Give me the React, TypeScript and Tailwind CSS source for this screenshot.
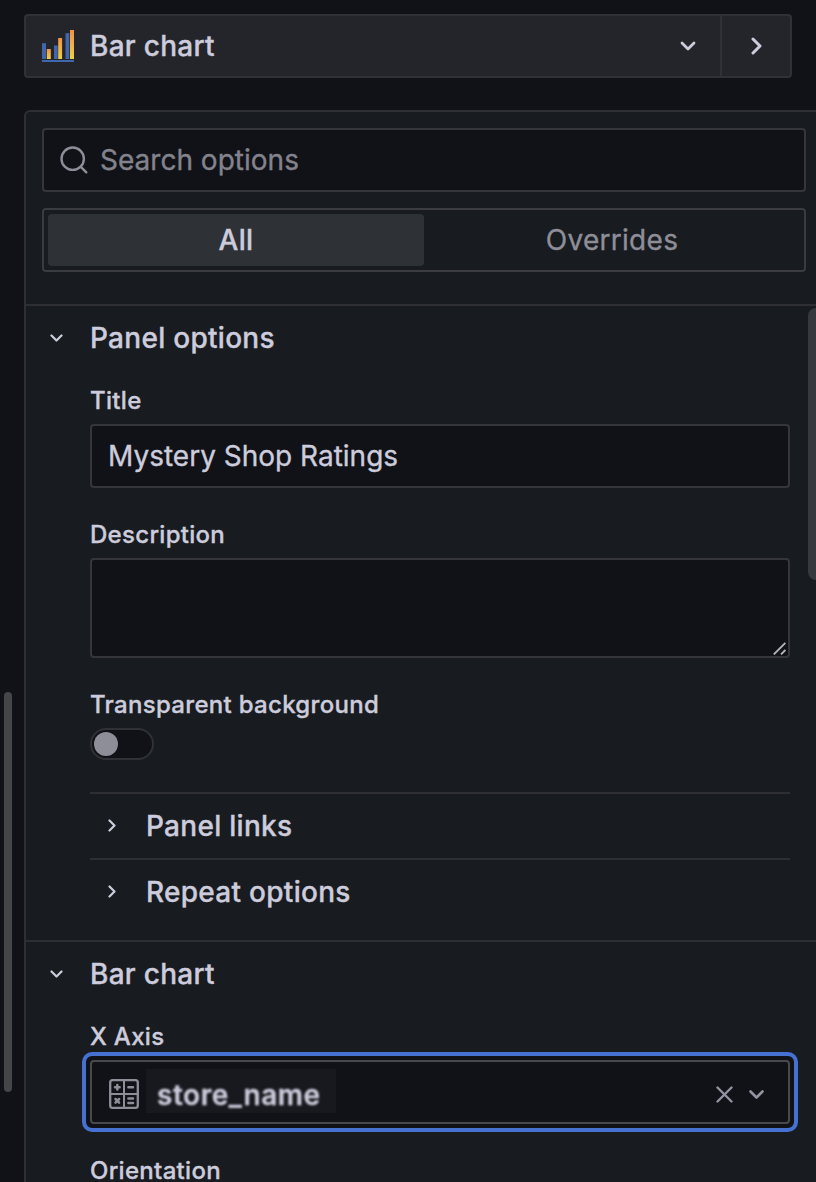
import type { ReactNode } from "react";

type StrokeProps = { d: string; w: number; h: number; sw: number; className?: string };

function Stroke({ d, w, h, sw, className = "" }: StrokeProps) {
  return (
    <svg
      width={w}
      height={h}
      viewBox={`0 0 ${w} ${h}`}
      fill="none"
      stroke="currentColor"
      strokeWidth={sw}
      strokeLinecap="round"
      strokeLinejoin="round"
      className={`shrink-0 ${className}`}
    >
      <path d={d} />
    </svg>
  );
}

function BarChartLogo() {
  return (
    <svg width="32" height="32" viewBox="0 0 32 32" className="shrink-0">
      <defs>
        <linearGradient id="warm" x1="0" y1="0" x2="0" y2="29" gradientUnits="userSpaceOnUse">
          <stop offset="0" stopColor="#f2924a" />
          <stop offset="1" stopColor="#ecd043" />
        </linearGradient>
        <linearGradient id="warmMid" x1="0" y1="8" x2="0" y2="29" gradientUnits="userSpaceOnUse">
          <stop offset="0" stopColor="#f2924a" />
          <stop offset="1" stopColor="#ecd043" />
        </linearGradient>
        <linearGradient id="warmLow" x1="0" y1="19" x2="0" y2="29" gradientUnits="userSpaceOnUse">
          <stop offset="0" stopColor="#f2924a" />
          <stop offset="1" stopColor="#ecd043" />
        </linearGradient>
      </defs>
      <g fill="#4067ab">
        <rect x="0" y="13.2" width="4" height="15.8" />
        <rect x="12" y="15.5" width="3.7" height="13.5" />
        <rect x="23.5" y="3.2" width="3.8" height="25.8" />
        <rect x="0" y="30" width="32" height="2" />
      </g>
      <rect x="4.8" y="19" width="4" height="10" fill="url(#warmLow)" />
      <rect x="16.2" y="8" width="3.9" height="21" fill="url(#warmMid)" />
      <rect x="28" y="0" width="4" height="29" fill="url(#warm)" />
    </svg>
  );
}

function CalculatorIcon() {
  return (
    <svg
      width="30"
      height="30"
      viewBox="0 0 30 30"
      fill="none"
      stroke="currentColor"
      strokeWidth="2.3"
      strokeLinecap="round"
      className="mt-1 shrink-0 text-[#8e8e99]"
    >
      <rect x="1.2" y="1.2" width="27.6" height="27.6" rx="2.4" />
      <path d="M15 1.3V28.7M1.3 15H28.7" strokeWidth="2" />
      <path
        d="M6 8.3H10.6M8.3 6V10.6M19.4 8.3H24M6.5 20L10.1 23.6M10.1 20L6.5 23.6M19.4 19.6H24M19.4 23.9H24"
        strokeWidth="2.5"
      />
    </svg>
  );
}

function SectionHeader({ children }: { children: ReactNode }) {
  return (
    <div className="flex h-16 items-center pl-[23.5px]">
      <Stroke d="M1.5 1.5L6.5 6.5L11.5 1.5" w={13} h={8} sw={2.2} />
      <span className="ml-[27.5px] text-[28px] font-medium tracking-[0.28px] whitespace-nowrap">{children}</span>
    </div>
  );
}

function SubHeader({ children }: { children: ReactNode }) {
  return (
    <div className="flex h-[66px] items-center border-t-2 border-[#2d2f34] pl-[18px]">
      <Stroke d="M1.5 1.5L6.5 6.5L1.5 11.5" w={8} h={13} sw={2.2} className="mb-px" />
      <span className="ml-[30px] text-[28px] font-medium tracking-[0.28px] whitespace-nowrap">{children}</span>
    </div>
  );
}

function Label({ children }: { children: ReactNode }) {
  return (
    <div className="h-8 pt-px text-[24px] leading-8 font-medium tracking-[0.3px] whitespace-nowrap">{children}</div>
  );
}

export default function App() {
  return (
    <div className="relative flex h-[1182px] w-[816px] flex-col overflow-hidden bg-[#111217] pt-[14px] pl-6 font-['Inter',sans-serif] text-[28px] text-[#ccccdc] [-webkit-text-stroke:0.35px]">
      <div className="absolute top-[692px] left-1 h-[400px] w-2 rounded-full bg-[#444549]" />
      <div className="absolute top-[308px] left-[808px] h-[272px] w-4 rounded-lg bg-[#36393d]" />

      <div className="flex h-16 w-[768px] shrink-0 rounded-[4px] border-2 border-[#303136] bg-[#24252b]">
        <div className="flex w-[694px] items-center pr-[24px] pl-4">
          <BarChartLogo />
          <span className="ml-4 grow text-[28px] font-medium tracking-[0.28px]">Bar chart</span>
          <Stroke d="M2 2L8 8L14 2" w={16} h={10} sw={2.8} />
        </div>
        <div className="flex grow items-center justify-center border-l-2 border-[#303136]">
          <Stroke d="M2 2L9 9L2 16" w={11} h={18} sw={3} />
        </div>
      </div>

      <div className="mt-8 flex h-[1080px] shrink-0 flex-col rounded-tl-[6px] border-t-2 border-l-2 border-[#2d2f34] bg-[#181b1f]">
        <div className="h-[194px] shrink-0 border-b-2 border-[#2d2f34] pt-4 pr-[10px] pl-4">
          <div className="flex h-16 items-center rounded-[4px] border-2 border-[#35363b] bg-[#111217] pl-4 text-[#8e8e99]">
            <svg
              width="28"
              height="28"
              viewBox="0 0 28 28"
              fill="none"
              stroke="currentColor"
              strokeWidth="2.4"
              strokeLinecap="round"
              className="shrink-0"
            >
              <circle cx="12.7" cy="12.7" r="11.2" />
              <path d="M20.8 20.8L26.3 26.3" />
            </svg>
            <span className="ml-3 tracking-[0.01px] text-[#83838e]">Search options</span>
          </div>
          <div className="mt-4 flex h-16 items-center rounded-[4px] border-2 border-[#3a3c41] p-1">
            <div className="flex h-[52px] w-[376px] items-center justify-center rounded-[4px] bg-[#2e3136] font-medium tracking-[0.28px]">
              All
            </div>
            <div className="flex h-[52px] w-[376px] items-center justify-center tracking-[0.28px] text-[#8e8e99]">
              Overrides
            </div>
          </div>
        </div>

        <div className="h-[636px] shrink-0 border-b-2 border-[#2d2f34]">
          <SectionHeader>Panel options</SectionHeader>
          <div className="ml-16 w-[700px] pt-[14px]">
            <Label>Title</Label>
            <div className="mt-2 flex h-16 items-center rounded-[4px] border-2 border-[#35363b] bg-[#111217] pl-4">
              Mystery Shop Ratings
            </div>
            <div className="h-[30px]" />
            <Label>Description</Label>
            <div className="mt-2 flex h-[100px] items-end justify-end rounded-[4px] border-2 border-[#35363b] bg-[#111217] pr-[2px] pb-px">
              <svg width="13" height="13" viewBox="0 0 13 13" stroke="#b4b4b6" strokeWidth="1.9">
                <path d="M0.8 12.4L12.4 0.8M8 12.4L12.4 8" />
              </svg>
            </div>
            <div className="h-[30px]" />
            <Label>Transparent background</Label>
            <div className="mt-2 mb-8 flex h-8 w-16 items-center rounded-full border-2 border-[#303136] bg-[#111217] pl-[2px]">
              <div className="size-6 rounded-full bg-[#8e8e99]" />
            </div>
            <SubHeader>Panel links</SubHeader>
            <SubHeader>Repeat options</SubHeader>
          </div>
        </div>

        <SectionHeader>Bar chart</SectionHeader>
        <div className="ml-14 w-[716px] pt-[14px]">
          <div className="pl-2">
            <Label>X Axis</Label>
          </div>
          <div className="h-20 rounded-[10px] border-4 border-[#4671d0] bg-[#111217] p-1">
            <div className="flex h-16 items-center rounded-[4px] border-2 border-[#48494d] pr-[24.5px] pl-[17px]">
              <CalculatorIcon />
              <div className="mt-[-2px] ml-[7px] flex h-11 w-[190px] items-center bg-[#18191e] pl-[11px]">
                <span className="mt-[7px] text-[28px] font-semibold tracking-[0.55px] blur-[0.8px]">store_name</span>
              </div>
              <div className="grow" />
              <Stroke
                d="M1.5 1.5L15.5 15.5M15.5 1.5L1.5 15.5"
                w={17}
                h={17}
                sw={2.4}
                className="mt-1 text-[#9292a0]"
              />
              <Stroke d="M1.5 1.5L7.5 7.5L13.5 1.5" w={15} h={9} sw={2.6} className="mt-1 ml-4 text-[#9292a0]" />
            </div>
          </div>
          <div className="pt-[22px] pl-2">
            <Label>Orientation</Label>
          </div>
        </div>
      </div>
    </div>
  );
}
